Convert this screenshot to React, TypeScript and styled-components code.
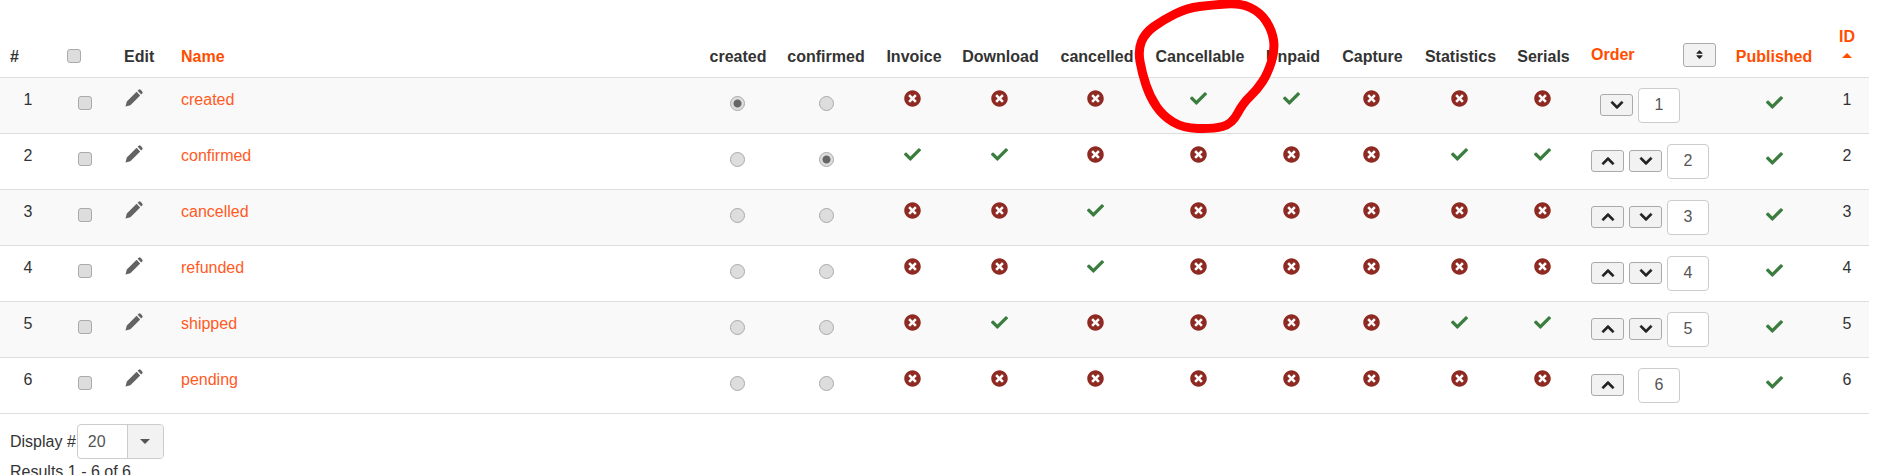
import { FaCheck, FaChevronDown, FaChevronUp, FaSort, FaTimesCircle } from 'react-icons/fa'
import styled, { createGlobalStyle } from 'styled-components'

const GlobalStyle = createGlobalStyle`
  html, body {
    margin: 0;
    height: 475px;
    overflow: hidden;
    background: #fff;
  }
  body {
    font-family: "Liberation Sans", Arial, sans-serif;
    font-size: 16px;
    line-height: 23px;
    color: #333;
  }
`

const Page = styled.div`
  position: relative;
  width: 1882px;
  height: 475px;
  overflow: hidden;
`

const Table = styled.table`
  width: 1869px;
  table-layout: fixed;
  border-collapse: collapse;
  border-spacing: 0;
`

const Head = styled.th<{ $align?: string; $orange?: boolean }>`
  height: 77px;
  box-sizing: border-box;
  padding: 0 0 9px ${p => (p.$align === 'left' ? '8px' : '0')};
  border-bottom: 1px solid #ddd;
  vertical-align: bottom;
  text-align: ${p => p.$align || 'center'};
  white-space: nowrap;
  font-weight: bold;
  color: ${p => (p.$orange ? '#ff4e00' : '#333')};
`

const NumberHead = styled(Head)`
  padding-left: 10px;
`

const Row = styled.tr<{ $odd: boolean }>`
  background: ${p => (p.$odd ? '#f9f9f9' : '#fff')};
`

const Cell = styled.td<{ $align?: string }>`
  height: 56px;
  box-sizing: border-box;
  padding: 10px 0 0;
  border-bottom: 1px solid #ddd;
  vertical-align: top;
  text-align: ${p => p.$align || 'center'};
`

const NameCell = styled(Cell)`
  padding-left: 8px;
  color: #ff5a1f;
`

const EditCell = styled(Cell)`
  padding-left: 9px;
  color: #636363;
  line-height: 18px;
`

const CheckCell = styled(Cell)`
  padding-right: 2px;
`

const RadioCell = styled(Cell)<{ $nudge?: boolean }>`
  padding-right: ${p => (p.$nudge ? '2px' : '0')};
`

const FlagCell = styled(Cell)`
  padding-right: 3px;
`

const PencilIcon = styled.svg`
  display: inline-block;
  width: 18px;
  height: 18px;
  margin-top: 1px;
`

const Check = styled.input`
  appearance: none;
  display: inline-block;
  box-sizing: border-box;
  width: 14px;
  height: 14px;
  margin: 8px 0 0;
  vertical-align: top;
  background: #ddd;
  border: 1px solid #aaa;
  border-radius: 3px;
`

const HeadCheck = styled(Check)`
  margin: 0 0 2px 3px;
  vertical-align: middle;
`

const Radio = styled.input`
  appearance: none;
  display: inline-block;
  box-sizing: border-box;
  width: 15px;
  height: 15px;
  margin: 8px 0 0;
  vertical-align: top;
  background: #ddd;
  border: 1px solid #aaa;
  border-radius: 50%;

  &:checked {
    background: radial-gradient(circle, #666 0 3.5px, #ddd 4.5px);
  }
`

const Flag = styled.span<{ $on: boolean; $low?: boolean }>`
  display: inline-flex;
  margin-top: ${p => (p.$low ? '6px' : '2px')};
  font-size: 17px;
  color: ${p => (p.$on ? '#3a7d3e' : '#8e2a22')};
`

const OrderGroup = styled.div`
  display: flex;
  align-items: center;
  gap: 5px;
  height: 35px;
  padding-left: 11px;
`

const MoveButton = styled.button`
  display: flex;
  align-items: center;
  justify-content: center;
  box-sizing: border-box;
  width: 33px;
  height: 22px;
  padding: 0;
  font-size: 14px;
  color: #222;
  background: #f2f2f2;
  border: 1px solid #aaa;
  border-radius: 3px;

  svg {
    stroke: currentColor;
    stroke-width: 24;
  }
`

const Slot = styled.span`
  width: 4px;
`

const OrderInput = styled.input`
  box-sizing: border-box;
  width: 42px;
  height: 35px;
  padding: 0;
  font: inherit;
  text-align: center;
  color: #555;
  background: #fff;
  border: 1px solid #ccc;
  border-radius: 4px;
`

const OrderHead = styled.div`
  display: flex;
  align-items: center;
  justify-content: space-between;
  padding: 0 9px 1px 3px;
`

const SortButton = styled(MoveButton)`
  height: 24px;
  font-size: 11px;

  svg {
    stroke-width: 0;
  }
`

const IdHead = styled.div`
  display: flex;
  flex-direction: column;
  align-items: center;
  gap: 5px;
  padding: 0 0 10px 2px;
`

const Caret = styled.span<{ $up?: boolean }>`
  width: 0;
  height: 0;
  border-left: 5px solid transparent;
  border-right: 5px solid transparent;
  border-bottom: ${p => (p.$up ? '5px solid #ff4e00' : '0')};
  border-top: ${p => (p.$up ? '0' : '5px solid #555')};
`

const IdCell = styled(Cell)`
  padding-left: 2px;
`

const Footer = styled.div`
  padding: 10px 0 0 10px;
`

const DisplayRow = styled.div`
  display: flex;
  align-items: center;
  gap: 1px;
`

const PageSelect = styled.div`
  display: flex;
  box-sizing: border-box;
  width: 87px;
  height: 35px;
  background: #fff;
  border: 1px solid #ccc;
  border-radius: 4px;
  overflow: hidden;
`

const SelectValue = styled.span`
  flex: 1;
  padding-left: 10px;
  line-height: 33px;
  color: #555;
`

const SelectArrow = styled.span`
  display: flex;
  align-items: center;
  justify-content: center;
  width: 35px;
  background: #f2f2f2;
  border-left: 1px solid #ccc;
`

const Results = styled.div`
  margin-top: 1px;
`

const Scribble = styled.svg`
  position: absolute;
  left: 0;
  top: 0;
  pointer-events: none;
`

const flagColumns = ['Invoice', 'Download', 'cancelled', 'Cancellable', 'Unpaid', 'Capture', 'Statistics', 'Serials']

const rows = [
  { name: 'created', flags: [0, 0, 0, 1, 1, 0, 0, 0], up: false, down: true },
  { name: 'confirmed', flags: [1, 1, 0, 0, 0, 0, 1, 1], up: true, down: true },
  { name: 'cancelled', flags: [0, 0, 1, 0, 0, 0, 0, 0], up: true, down: true },
  { name: 'refunded', flags: [0, 0, 1, 0, 0, 0, 0, 0], up: true, down: true },
  { name: 'shipped', flags: [0, 1, 0, 0, 0, 0, 1, 1], up: true, down: true },
  { name: 'pending', flags: [0, 0, 0, 0, 0, 0, 0, 0], up: true, down: false },
]

const widths = [56, 60, 57, 527, 76, 100, 76, 97, 96, 110, 76, 83, 93, 73, 145, 98, 46]

const circlePoints = [
  [1212, 5], [1240, 3], [1260, 12], [1272, 30], [1275, 50], [1268, 73], [1257, 90], [1243, 103], [1232, 124],
  [1213, 129], [1183, 128], [1163, 116], [1150, 97], [1142, 73], [1138, 50], [1145, 33], [1163, 20], [1187, 8],
]

// smooth closed curve through the midpoints of the hand drawn outline
const circlePath = () => {
  const mid = (a: number[], b: number[]) => `${(a[0] + b[0]) / 2} ${(a[1] + b[1]) / 2}`
  const n = circlePoints.length
  let d = `M${mid(circlePoints[n - 1], circlePoints[0])}`
  circlePoints.forEach((p, i) => {
    d += ` Q${p[0]} ${p[1]} ${mid(p, circlePoints[(i + 1) % n])}`
  })
  return d + 'Z'
}

const FlagIcon = ({ on, low }: { on: boolean; low?: boolean }) => (
  <Flag $on={on} $low={low}>{on ? <FaCheck /> : <FaTimesCircle />}</Flag>
)

const Pencil = () => (
  <PencilIcon viewBox="0 0 18 18" fill="currentColor">
    <path d="M0.5 17.5 L1.8 12.6 L11.6 2.8 L15.2 6.4 L5.4 16.2 Z" />
    <path d="M12.6 1.8 L13.6 0.8 Q14.6 -0.1 15.6 0.8 L17.2 2.4 Q18.1 3.4 17.2 4.4 L16.2 5.4 Z" />
  </PencilIcon>
)

export default function App() {
  return (
    <Page>
      <GlobalStyle />
      <Table>
        <colgroup>
          {widths.map((w, i) => <col key={i} width={w} />)}
        </colgroup>
        <thead>
          <tr>
            <NumberHead $align="left">#</NumberHead>
            <Head $align="left"><HeadCheck type="checkbox" /></Head>
            <Head $align="left">Edit</Head>
            <Head $align="left" $orange>Name</Head>
            <Head>created</Head>
            <Head>confirmed</Head>
            {flagColumns.map(c => <Head key={c}>{c}</Head>)}
            <Head $align="left" $orange>
              <OrderHead>
                <span>Order</span>
                <SortButton><FaSort /></SortButton>
              </OrderHead>
            </Head>
            <Head $orange>Published</Head>
            <Head $orange>
              <IdHead>
                <span>ID</span>
                <Caret $up />
              </IdHead>
            </Head>
          </tr>
        </thead>
        <tbody>
          {rows.map((r, i) => (
            <Row key={r.name} $odd={i % 2 === 0}>
              <Cell>{i + 1}</Cell>
              <CheckCell><Check type="checkbox" /></CheckCell>
              <EditCell $align="left"><Pencil /></EditCell>
              <NameCell $align="left">{r.name}</NameCell>
              <RadioCell $nudge><Radio type="radio" name={`created-${i}`} defaultChecked={i === 0} /></RadioCell>
              <RadioCell><Radio type="radio" name={`confirmed-${i}`} defaultChecked={i === 1} /></RadioCell>
              {r.flags.map((f, j) => (
                <FlagCell key={j}><FlagIcon on={f === 1} /></FlagCell>
              ))}
              <Cell $align="left">
                <OrderGroup>
                  {r.up ? <MoveButton><FaChevronUp /></MoveButton> : <Slot />}
                  {r.down ? <MoveButton><FaChevronDown /></MoveButton> : <Slot />}
                  <OrderInput readOnly value={i + 1} />
                </OrderGroup>
              </Cell>
              <Cell><FlagIcon on low /></Cell>
              <IdCell>{i + 1}</IdCell>
            </Row>
          ))}
        </tbody>
      </Table>
      <Footer>
        <DisplayRow>
          Display #
          <PageSelect>
            <SelectValue>20</SelectValue>
            <SelectArrow><Caret /></SelectArrow>
          </PageSelect>
        </DisplayRow>
        <Results>Results 1 - 6 of 6</Results>
      </Footer>
      <Scribble width="1882" height="140" viewBox="0 0 1882 140">
        <path d={circlePath()} fill="none" stroke="#fe0000" strokeWidth="9" strokeLinejoin="round" />
      </Scribble>
    </Page>
  )
}
